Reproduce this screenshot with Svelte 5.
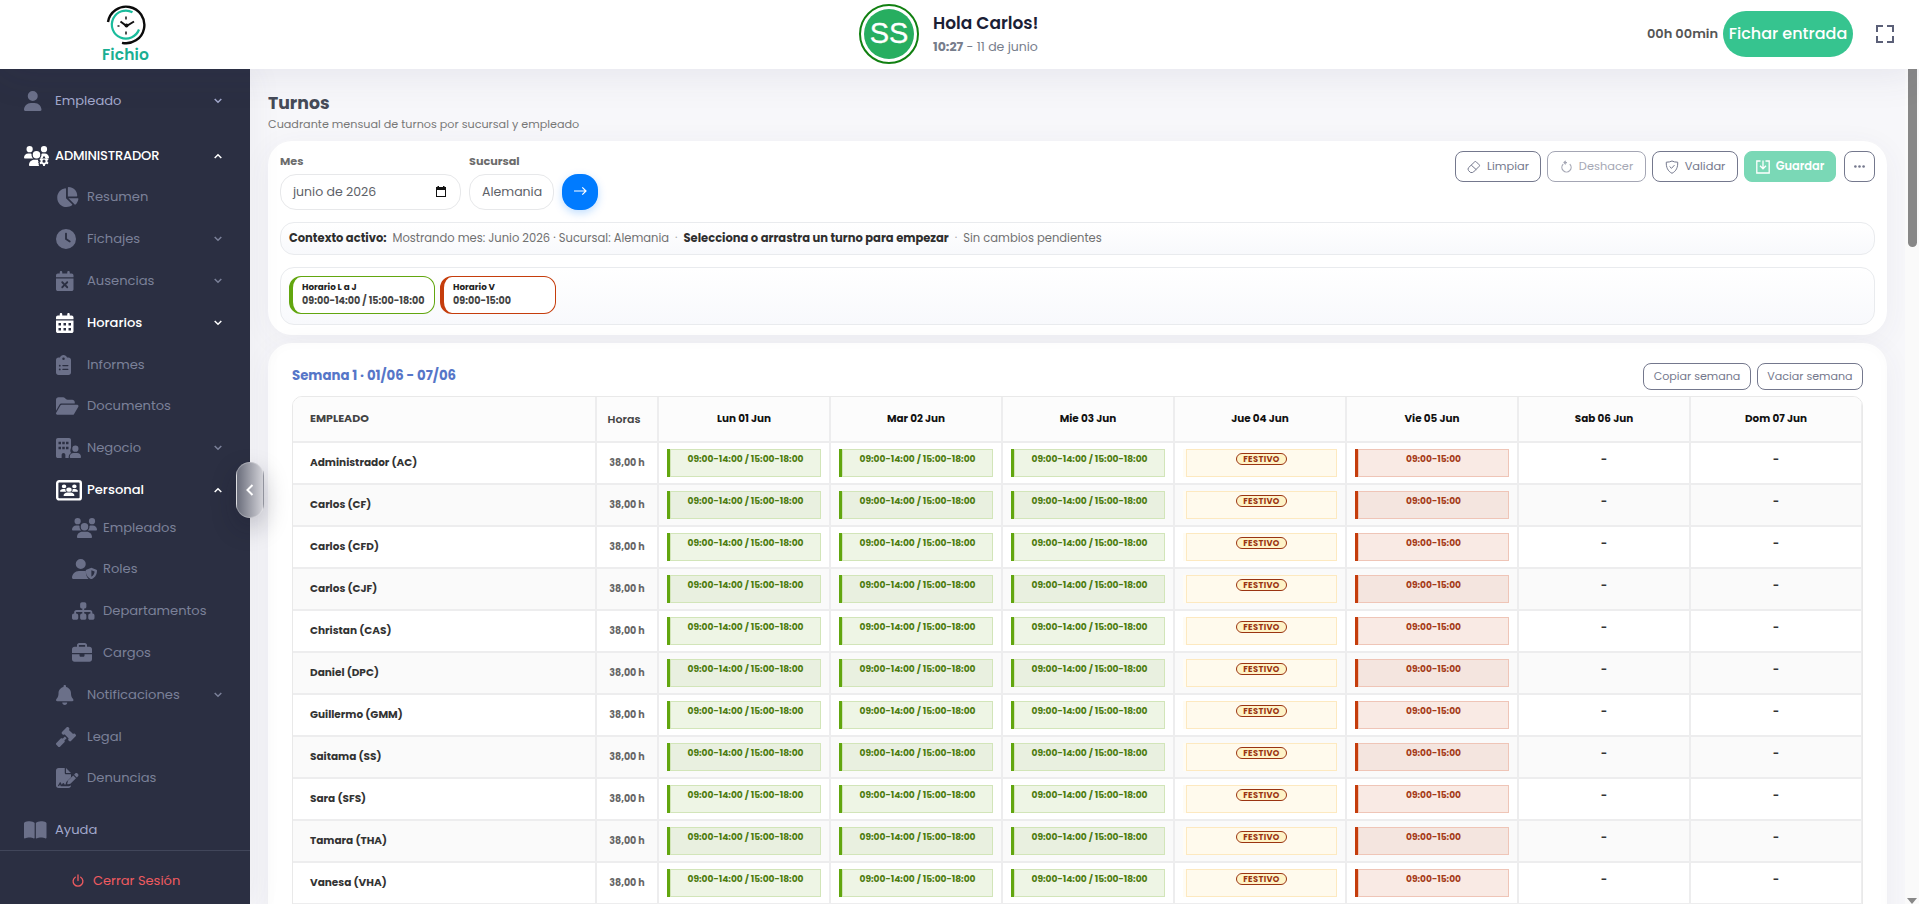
<script lang="ts">
  type Shape = { w: number; d: string };

  const usersPath =
    'M144 0a80 80 0 1 1 0 160A80 80 0 1 1 144 0zM512 0a80 80 0 1 1 0 160A80 80 0 1 1 512 0zM0 298.7C0 239.8 47.8 192 106.7 192l42.7 0c15.9 0 31 3.5 44.6 9.7c-1.3 7.2-1.9 14.7-1.9 22.3c0 38.2 16.8 72.5 43.3 96c-.2 0-.4 0-.7 0L21.3 320C9.6 320 0 310.4 0 298.7zM405.3 320c-.2 0-.4 0-.7 0c26.6-23.5 43.3-57.8 43.3-96c0-7.6-.7-15-1.9-22.3c13.6-6.3 28.7-9.7 44.6-9.7l42.7 0C592.2 192 640 239.8 640 298.7c0 11.8-9.6 21.3-21.3 21.3l-213.3 0zM224 224a96 96 0 1 1 192 0 96 96 0 1 1 -192 0z';

  const icons: Record<string, Shape> = {
    user: {
      w: 448,
      d: 'M224 256A128 128 0 1 0 224 0a128 128 0 1 0 0 256zm-45.7 48C79.8 304 0 383.8 0 482.3C0 498.7 13.3 512 29.7 512l388.6 0c16.4 0 29.7-13.3 29.7-29.7C448 383.8 368.2 304 269.7 304l-91.4 0z',
    },
    usersGear: {
      w: 640,
      d:
        usersPath +
        'M128 485.3C128 411.7 187.7 352 261.3 352l100 0c-8 18-2 30 12 42-16 22-12 36 6 52-10 22-4 44 12 66l-236.7 0c-14.7 0-26.7-11.9-26.7-26.7zM490 268h44l8 36 28 16 35-11 22 38-27 25v32l27 25-22 38-35-11-28 16-8 40h-44l-8-40-28-16-35 11-22-38 27-25v-32l-27-25 22-38 35 11 28-16zM512 348a40 40 0 1 0 0 80 40 40 0 1 0 0-80z',
    },
    pie: {
      w: 576,
      d: 'M304 240l0-223.4c0-9 7-16.6 16-16.6C443.7 0 544 100.3 544 224c0 9-7.6 16-16.6 16L304 240zM32 272C32 150.7 122.1 50.3 239 34.3c9.2-1.3 17 6.1 17 15.4L256 288 412.5 444.5c6.7 6.7 6.2 17.7-1.5 23.1C371.8 495.6 323.8 512 272 512C139.5 512 32 404.6 32 272zm526.4 16c9.3 0 16.6 7.8 15.4 17c-7.7 55.9-34.6 105.6-73.9 142.3c-6 5.6-15.4 5.2-21.2-.7L320 288l238.4 0z',
    },
    clock: {
      w: 512,
      d: 'M256 0a256 256 0 1 1 0 512A256 256 0 1 1 256 0zM232 120l0 136c0 8 4 15.5 10.7 20l96 64c11 7.4 25.9 4.4 33.3-6.7s4.4-25.9-6.7-33.3L280 243.2 280 120c0-13.3-10.7-24-24-24s-24 10.7-24 24z',
    },
    calendarX: {
      w: 448,
      d: 'M128 0c17.7 0 32 14.3 32 32l0 32 128 0 0-32c0-17.7 14.3-32 32-32s32 14.3 32 32l0 32 48 0c26.5 0 48 21.5 48 48l0 48L0 160l0-48C0 85.5 21.5 64 48 64l48 0 0-32c0-17.7 14.3-32 32-32zM0 192l448 0 0 272c0 26.5-21.5 48-48 48L48 512c-26.5 0-48-21.5-48-48L0 192zM305 305c9.4-9.4 9.4-24.6 0-33.9s-24.6-9.4-33.9 0l-47 47-47-47c-9.4-9.4-24.6-9.4-33.9 0s-9.4 24.6 0 33.9l47 47-47 47c-9.4 9.4-9.4 24.6 0 33.9s24.6 9.4 33.9 0l47-47 47 47c9.4 9.4 24.6 9.4 33.9 0s9.4-24.6 0-33.9l-47-47 47-47z',
    },
    calendar: {
      w: 448,
      d: 'M128 0c17.7 0 32 14.3 32 32l0 32 128 0 0-32c0-17.7 14.3-32 32-32s32 14.3 32 32l0 32 48 0c26.5 0 48 21.5 48 48l0 48L0 160l0-48C0 85.5 21.5 64 48 64l48 0 0-32c0-17.7 14.3-32 32-32zM0 192l448 0 0 272c0 26.5-21.5 48-48 48L48 512c-26.5 0-48-21.5-48-48L0 192zM64 256v64h64v-64zM192 256v64h64v-64zM320 256v64h64v-64zM64 384v64h64v-64zM192 384v64h64v-64zM320 384v64h64v-64z',
    },
    clipboard: {
      w: 384,
      d: 'M192 0c-41.8 0-77.4 26.7-90.5 64L64 64C28.7 64 0 92.7 0 128L0 448c0 35.3 28.7 64 64 64l256 0c35.3 0 64-28.7 64-64l0-320c0-35.3-28.7-64-64-64l-37.5 0C269.4 26.7 233.8 0 192 0zm0 64a32 32 0 1 1 0 64 32 32 0 1 1 0-64zM72 272a24 24 0 1 1 48 0 24 24 0 1 1-48 0zm104-16h128c22 0 22 32 0 32H176c-22 0-22-32 0-32zM72 368a24 24 0 1 1 48 0 24 24 0 1 1-48 0zm104-16h128c22 0 22 32 0 32H176c-22 0-22-32 0-32z',
    },
    folder: {
      w: 576,
      d: 'M88.7 223.8L0 375.8 0 96C0 60.7 28.7 32 64 32l117.5 0c17 0 33.3 6.7 45.3 18.7l26.5 26.5c12 12 28.3 18.7 45.3 18.7L416 96c35.3 0 64 28.7 64 64l0 32-336 0c-22.8 0-43.8 12.1-55.3 31.8zm27.6 16.1C122.1 230 132.6 224 144 224l400 0c11.5 0 22 6.1 27.7 16.1s5.7 22.2-.1 32.1l-112 192C453.9 474 443.4 480 432 480L32 480c-11.5 0-22-6.1-27.7-16.1s-5.7-22.2 .1-32.1l112-192z',
    },
    buildingUser: {
      w: 640,
      d: 'M48 0C21.5 0 0 21.5 0 48V464c0 26.5 21.5 48 48 48h96v-80c0-26.5 21.5-48 48-48s48 21.5 48 48v80h85c-6-60 18-104 59-130-24-42-22-88 0-128V48c0-26.5-21.5-48-48-48zM64 96h64v64H64zM160 96h64v64h-64zM256 96h64v64h-64zM64 224h64v64H64zM160 224h64v64h-64zM256 224h64v64h-64zM496 192a80 80 0 1 1 0 160 80 80 0 1 1 0-160zM352 485.3C352 426 396 384 450 384h92c54 0 98 42 98 101.3 0 15-12 26.7-27 26.7H379c-15 0-27-12-27-26.7z',
    },
    users: {
      w: 640,
      d:
        usersPath +
        'M128 485.3C128 411.7 187.7 352 261.3 352l117.3 0C452.3 352 512 411.7 512 485.3c0 14.7-11.9 26.7-26.7 26.7l-330.7 0c-14.7 0-26.7-11.9-26.7-26.7z',
    },
    userShield: {
      w: 640,
      d: 'M224 256A128 128 0 1 0 224 0a128 128 0 1 0 0 256zm-45.7 48C79.8 304 0 383.8 0 482.3C0 498.7 13.3 512 29.7 512l388.6 0c2 0 5 0 7-1-40-42-72-105-72-180 0-10 2-18 6-25-25-2-60-2-181 0zM496 224l128 48c10 4 16 12 16 22 0 90-34 170-128 215-10 4-22 4-32 0-94-45-128-125-128-215 0-10 6-18 16-22zm0 65v163c52-28 80-75 82-132z',
    },
    sitemap: {
      w: 576,
      d: 'M208 80c0-26.5 21.5-48 48-48l64 0c26.5 0 48 21.5 48 48l0 64c0 26.5-21.5 48-48 48l-8 0 0 40 152 0c30.9 0 56 25.1 56 56l0 32 8 0c26.5 0 48 21.5 48 48l0 64c0 26.5-21.5 48-48 48l-64 0c-26.5 0-48-21.5-48-48l0-64c0-26.5 21.5-48 48-48l8 0 0-32c0-4.4-3.6-8-8-8l-152 0 0 40 8 0c26.5 0 48 21.5 48 48l0 64c0 26.5-21.5 48-48 48l-64 0c-26.5 0-48-21.5-48-48l0-64c0-26.5 21.5-48 48-48l8 0 0-40-152 0c-4.4 0-8 3.6-8 8l0 32 8 0c26.5 0 48 21.5 48 48l0 64c0 26.5-21.5 48-48 48l-64 0c-26.5 0-48-21.5-48-48l0-64c0-26.5 21.5-48 48-48l8 0 0-32c0-30.9 25.1-56 56-56l152 0 0-40-8 0c-26.5 0-48-21.5-48-48l0-64z',
    },
    briefcase: {
      w: 512,
      d: 'M184 48l144 0c4.4 0 8 3.6 8 8l0 40L176 96l0-40c0-4.4 3.6-8 8-8zm-56 8l0 40L64 96C28.7 96 0 124.7 0 160l0 96 192 0 128 0 192 0 0-96c0-35.3-28.7-64-64-64l-64 0 0-40c0-30.9-25.1-56-56-56L184 0c-30.9 0-56 25.1-56 56zM512 288l-192 0 0 32c0 17.7-14.3 32-32 32l-64 0c-17.7 0-32-14.3-32-32l0-32L0 288 0 416c0 35.3 28.7 64 64 64l384 0c35.3 0 64-28.7 64-64l0-128z',
    },
    bell: {
      w: 448,
      d: 'M224 0c-17.7 0-32 14.3-32 32l0 19.2C119 66 64 130.6 64 208l0 18.8c0 47-17.3 92.4-48.5 127.6l-7.4 8.3c-8.4 9.4-10.4 22.9-5.3 34.4S19.4 416 32 416l384 0c12.6 0 24-7.4 29.2-18.9s3.1-25-5.3-34.4l-7.4-8.3C401.3 319.2 384 273.9 384 226.8l0-18.8c0-77.4-55-142-128-156.8L256 32c0-17.7-14.3-32-32-32zm45.3 493.3c12-12 18.7-28.3 18.7-45.3l-64 0-64 0c0 17 6.7 33.3 18.7 45.3s28.3 18.7 45.3 18.7s33.3-6.7 45.3-18.7z',
    },
    gavel: {
      w: 512,
      d: 'M318.6 9.4c-12.5-12.5-32.8-12.5-45.3 0l-120 120c-12.5 12.5-12.5 32.8 0 45.3l16 16c12.5 12.5 32.8 12.5 45.3 0l4-4L325.4 293.4l-4 4c-12.5 12.5-12.5 32.8 0 45.3l16 16c12.5 12.5 32.8 12.5 45.3 0l120-120c12.5-12.5 12.5-32.8 0-45.3l-16-16c-12.5-12.5-32.8-12.5-45.3 0l-4 4L330.6 74.6l4-4c12.5-12.5 12.5-32.8 0-45.3l-16-16zm-152 288c-12.5-12.5-32.8-12.5-45.3 0l-112 112c-12.5 12.5-12.5 32.8 0 45.3l48 48c12.5 12.5 32.8 12.5 45.3 0l112-112c12.5-12.5 12.5-32.8 0-45.3l-1.4-1.4L272 285.3 226.7 240 168 298.7l-1.4-1.4z',
    },
    signature: {
      w: 576,
      d: 'M64 0C28.7 0 0 28.7 0 64V448c0 35.3 28.7 64 64 64h256c35.3 0 64-28.7 64-64v-8c-20 18-50 25-85 25H120l-16-40-30 42-26-14 45-78c8-14 26-12 32 2l22 50 26-36c10-14 28-10 34 4l12 28h26l18-66L384 236v-76H256c-17.7 0-32-14.3-32-32V0zM256 0v128h128zM550 140c-16-16-42-16-58 0l-30 30 71 71 30-30c16-16 16-42 0-58zM440 192L311 321c-4 4-7 9-8 15l-15 60c-3 12 8 23 20 20l60-15c6-1 11-4 15-8l129-129z',
    },
    book: {
      w: 576,
      d: 'M249.6 471.5c10.8 3.8 22.4-4.1 22.4-15.5l0-377.4c0-4.2-1.6-8.4-5-11C247.4 52 202.4 32 144 32C93.5 32 46.3 45.3 18.1 56.1C6.8 60.5 0 71.7 0 83.8L0 454.1c0 11.9 12.8 20.2 24.1 16.5C55.6 460.1 105.5 448 144 448c33.9 0 79 14 105.6 23.5zm76.8 0C353 462 398.1 448 432 448c38.5 0 88.4 12.1 119.9 22.6c11.3 3.8 24.1-4.6 24.1-16.5l0-370.3c0-12.1-6.8-23.3-18.1-27.6C529.7 45.3 482.5 32 432 32c-58.4 0-103.4 20-123 35.6c-3.3 2.6-5 6.8-5 11L304 456c0 11.4 11.7 19.3 22.4 15.5z',
    },
  };

  type Item = {
    label: string;
    icon: string;
    level: number;
    chevron?: 'up' | 'down';
    active?: boolean;
    tight?: boolean;
  };

  const menu: Item[] = [
    { label: 'Empleado', icon: 'user', level: 1, chevron: 'down' },
    { label: 'ADMINISTRADOR', icon: 'usersGear', level: 1, chevron: 'up', active: true },
    { label: 'Resumen', icon: 'pie', level: 2 },
    { label: 'Fichajes', icon: 'clock', level: 2, chevron: 'down' },
    { label: 'Ausencias', icon: 'calendarX', level: 2, chevron: 'down' },
    { label: 'Horarios', icon: 'calendar', level: 2, chevron: 'down', active: true },
    { label: 'Informes', icon: 'clipboard', level: 2, tight: true },
    { label: 'Documentos', icon: 'folder', level: 2 },
    { label: 'Negocio', icon: 'buildingUser', level: 2, chevron: 'down' },
    { label: 'Personal', icon: 'frame', level: 2, chevron: 'up', active: true },
    { label: 'Empleados', icon: 'users', level: 3, tight: true },
    { label: 'Roles', icon: 'userShield', level: 3 },
    { label: 'Departamentos', icon: 'sitemap', level: 3 },
    { label: 'Cargos', icon: 'briefcase', level: 3 },
    { label: 'Notificaciones', icon: 'bell', level: 2, chevron: 'down' },
    { label: 'Legal', icon: 'gavel', level: 2, tight: true },
    { label: 'Denuncias', icon: 'signature', level: 2 },
    { label: 'Ayuda', icon: 'book', level: 1 },
  ];

  const days = ['Lun 01 Jun', 'Mar 02 Jun', 'Mie 03 Jun', 'Jue 04 Jun', 'Vie 05 Jun', 'Sab 06 Jun', 'Dom 07 Jun'];
  const week = ['long', 'long', 'long', 'holiday', 'short', 'free', 'free'];

  const employees = [
    'Administrador (AC)',
    'Carlos (CF)',
    'Carlos (CFD)',
    'Carlos (CJF)',
    'Christan (CAS)',
    'Daniel (DPC)',
    'Guillermo (GMM)',
    'Saitama (SS)',
    'Sara (SFS)',
    'Tamara (THA)',
    'Vanesa (VHA)',
  ];

  let month = 'junio de 2026';
  let branch = 'Alemania';
</script>

<div class="app">
  <header class="topbar">
    <div class="logo">
      <svg width="40" height="40" viewBox="0 0 40 40" fill="none">
        <path d="M2 17A18.3 18.3 0 1 1 16 37.8" stroke="#0b0b0b" stroke-width="2.4" />
        <path d="M26.5 7.3A14 14 0 1 0 33 24.5" stroke="#1abc9c" stroke-width="2.2" />
        <path d="M14.5 16.5l6 4.5 7.5-4.5" stroke="#111" stroke-width="2" />
        <path d="M20 11.5v3M20 26.5v3M11.5 21h2" stroke="#222" stroke-width="1.6" />
        <circle cx="20.5" cy="20.5" r="2" fill="#111" />
      </svg>
      <span>Fichio</span>
    </div>
    <div class="greeting">
      <div class="avatar"><span>SS</span></div>
      <div>
        <div class="hello">Hola Carlos!</div>
        <div class="now"><b>10:27</b> - 11 de junio</div>
      </div>
    </div>
    <div class="clock-in">
      <span class="worked">00h 00min</span>
      <button class="clock-btn">Fichar entrada</button>
      <svg class="expand" width="18" height="18" viewBox="0 0 18 18" fill="none" stroke="#5b6078" stroke-width="2">
        <path d="M1 7V1h6M11 1h6v6M17 11v6h-6M7 17H1v-6" />
      </svg>
    </div>
  </header>

  <aside class="sidebar">
    <nav>
      {#each menu as item}
        <a class="item level{item.level}" class:active={item.active} class:tight={item.tight} href="#{item.label}">
          <span class="icon">
            {#if item.icon === 'frame'}
              <svg width="26" height="21" viewBox="0 0 26 21">
                <rect x="1.2" y="1.2" width="23.6" height="18.2" rx="2" fill="none" stroke="currentColor" stroke-width="2.4" />
                <g transform="translate(4 4.6) scale(.0281 .0225)">
                  <path d={icons.users.d} fill="currentColor" />
                </g>
              </svg>
            {:else}
              <svg width={(icons[item.icon].w * 20) / 512} height="20" viewBox="0 0 {icons[item.icon].w} 512">
                <path d={icons[item.icon].d} fill="currentColor" fill-rule="evenodd" />
              </svg>
            {/if}
          </span>
          <span class="label">{item.label}</span>
          {#if item.chevron}
            <svg class="chevron" class:up={item.chevron === 'up'} width="8" height="6" viewBox="0 0 8 6" fill="none">
              <path d="M.7 1L4 4.3 7.3 1" stroke="currentColor" stroke-width="1.5" />
            </svg>
          {/if}
        </a>
      {/each}
    </nav>
    <a class="logout" href="#salir">
      <svg width="12" height="13" viewBox="0 0 12 13" fill="none" stroke="currentColor" stroke-width="1.3" stroke-linecap="round">
        <path d="M6 1v5.5M3.3 3.2a4.9 4.9 0 1 0 5.4 0" />
      </svg>
      Cerrar Sesión
    </a>
    <button class="collapse" aria-label="Contraer menú">
      <svg width="8" height="12" viewBox="0 0 8 12" fill="none" stroke="#fff" stroke-width="2">
        <path d="M6.5 1L1.5 6l5 5" />
      </svg>
    </button>
  </aside>

  <main>
    <h1>Turnos</h1>
    <p class="subtitle">Cuadrante mensual de turnos por sucursal y empleado</p>

    <section class="card filters">
      <div class="filter-row">
        <div class="field">
          <span class="field-label">Mes</span>
          <div class="input month">
            {month}
            <svg width="10" height="11" viewBox="0 0 10 11">
              <path d="M0 1h1.5V0h1.5v1h4V0h1.5v1H10v10H0zM1 4v6h8V4z" fill="#111" fill-rule="evenodd" />
            </svg>
          </div>
        </div>
        <div class="field">
          <span class="field-label">Sucursal</span>
          <div class="input branch">{branch}</div>
        </div>
        <button class="go" aria-label="Aplicar">
          <svg width="13" height="10" viewBox="0 0 13 10" fill="none" stroke="#fff" stroke-width="1.2">
            <path d="M0 5h12M8.3 1.3L12 5 8.3 8.7" />
          </svg>
        </button>
        <div class="actions">
          <button class="btn clean">
            <svg width="14" height="14" viewBox="0 0 14 14" fill="none" stroke="currentColor">
              <path d="M1.5 7.7L7.7 1.8q.8-.6 1.5 0l3 3q.7.8 0 1.5L6.5 12q-.6.5-1.3.5H4q-.6 0-1-.4L1.5 10.5q-1-1.3 0-2.8zM4.3 5.2l5 4.5" />
            </svg>
            Limpiar
          </button>
          <button class="btn undo" disabled>
            <svg width="13" height="14" viewBox="0 0 13 14" fill="none" stroke="currentColor" stroke-width="1.2">
              <path d="M3.2 4.2a4.6 4.6 0 1 0 6.6 0M7 2.6H4M5.7 .8L4 2.6l1.7 1.7" />
            </svg>
            Deshacer
          </button>
          <button class="btn check">
            <svg width="14" height="14" viewBox="0 0 14 14" fill="none" stroke="currentColor">
              <path d="M7 1C5.5 1.8 3.5 2.2 1.3 2.2c-.3 5 1.5 9 5.7 11.1 4.2-2.1 6-6.1 5.7-11.1C10.5 2.2 8.5 1.8 7 1zM4.6 6.5l1.9 1.8 3-3.2" />
            </svg>
            Validar
          </button>
          <button class="btn save" disabled>
            <svg width="14" height="14" viewBox="0 0 14 14" fill="none" stroke="currentColor" stroke-width="1.3">
              <path d="M4.5 1H.8v12h12.4V1H9.5M7 .5v8M4 5.8l3 3 3-3" />
            </svg>
            Guardar
          </button>
          <button class="btn more" aria-label="Más">
            <svg width="11" height="3" viewBox="0 0 11 3" fill="currentColor">
              <circle cx="1.4" cy="1.5" r="1.3" />
              <circle cx="5.5" cy="1.5" r="1.3" />
              <circle cx="9.6" cy="1.5" r="1.3" />
            </svg>
          </button>
        </div>
      </div>

      <div class="context">
        <b>Contexto activo:</b>
        <span>Mostrando mes: Junio 2026 · Sucursal: Alemania</span>
        <i>·</i>
        <b>Selecciona o arrastra un turno para empezar</b>
        <i>·</i>
        <span>Sin cambios pendientes</span>
      </div>

      <div class="palette">
        <div class="chip">
          <b>Horario L a J</b>
          <span>09:00-14:00 / 15:00-18:00</span>
        </div>
        <div class="chip red">
          <b>Horario V</b>
          <span>09:00-15:00</span>
        </div>
      </div>
    </section>

    <section class="card week">
      <div class="week-head">
        <h2>Semana 1 · 01/06 - 07/06</h2>
        <button class="btn small copy">Copiar semana</button>
        <button class="btn small empty">Vaciar semana</button>
      </div>
      <div class="grid">
        <div class="row head">
          <div class="cell name">EMPLEADO</div>
          <div class="cell hours">Horas</div>
          {#each days as day}
            <div class="cell day">{day}</div>
          {/each}
        </div>
        {#each employees as employee}
          <div class="row">
            <div class="cell name">{employee}</div>
            <div class="cell hours">38,00 h</div>
            {#each week as kind}
              <div class="cell">
                {#if kind === 'long'}
                  <div class="shift">09:00-14:00 / 15:00-18:00</div>
                {:else if kind === 'short'}
                  <div class="shift red">09:00-15:00</div>
                {:else if kind === 'holiday'}
                  <div class="shift holiday"><span>FESTIVO</span></div>
                {:else}
                  <div class="none">-</div>
                {/if}
              </div>
            {/each}
          </div>
        {/each}
      </div>
    </section>
  </main>

  <div class="scrollbar"><div class="thumb"></div><div class="arrow"></div></div>
</div>

<style>
  :global(body) {
    overflow: hidden;
  }

  .app {
    display: grid;
    grid-template: 69px 835px / 250px 1fr 14px;
    width: 1919px;
    height: 904px;
    overflow: hidden;
    background: #f7f7fa;
    font-family: Poppins, Inter, sans-serif;
    color: #333;
  }

  * {
    box-sizing: border-box;
  }

  button {
    font-family: inherit;
    padding: 0;
    border: 0;
    background: none;
  }

  svg {
    display: block;
    flex: none;
  }

  a {
    color: inherit;
    text-decoration: none;
  }

  .topbar {
    grid-column: 1 / -1;
    display: grid;
    grid-template-columns: 250px 1fr 400px;
    background: #fff;
    z-index: 2;
    box-shadow: 0 4px 40px rgba(60, 60, 110, 0.1);
  }

  .logo {
    display: flex;
    flex-direction: column;
    align-items: center;
    padding: 5px 0 0 1px;
  }

  .logo span {
    color: #1aae92;
    font-size: 15.5px;
    font-weight: 600;
    line-height: 19px;
    letter-spacing: 0.1px;
  }

  .greeting {
    display: flex;
    align-items: flex-start;
    gap: 14px;
    padding: 4px 0 0 609px;
    line-height: 1;
  }

  .avatar {
    width: 60px;
    height: 60px;
    border: 2px solid #118011;
    border-radius: 50%;
    padding: 3px;
  }

  .avatar span {
    display: block;
    height: 50px;
    border-radius: 50%;
    background: #27ae60;
    color: #fff;
    font: 29px/49px 'Liberation Sans', sans-serif;
    -webkit-text-stroke: 0.3px #fff;
    text-align: center;
  }

  .hello {
    margin-top: 11px;
    color: #1a2035;
    font-size: 17px;
    font-weight: 600;
    white-space: nowrap;
  }

  .now {
    margin-top: 9px;
    color: #777d8c;
    font-size: 12.5px;
    white-space: nowrap;
  }

  .clock-in {
    display: flex;
    align-items: center;
    justify-content: flex-end;
    padding: 0 25px 2px 0;
  }

  .worked {
    color: #555;
    font-size: 13px;
    font-weight: 600;
  }

  .clock-btn {
    width: 130px;
    height: 46px;
    margin: 0 23px 0 5px;
    border-radius: 23px;
    background: #36c48f;
    color: #fff;
    font-size: 16px;
    font-weight: 500;
    white-space: nowrap;
  }

  .sidebar {
    position: relative;
    z-index: 1;
    display: flex;
    flex-direction: column;
    background: #2b2f42;
    box-shadow: 4px 0 30px rgba(60, 60, 110, 0.06);
  }

  nav {
    height: 782px;
    padding-top: 11px;
    border-bottom: 1px solid #41465a;
  }

  .item {
    display: flex;
    align-items: center;
    height: 42px;
    padding: 0 28px 0 56px;
    color: #7b8199;
    font-size: 13.1px;
  }

  .level1 {
    height: 55px;
    margin-bottom: -7px;
    padding-left: 24px;
    color: #a2a8cc;
  }

  .level1:first-child {
    height: 42px;
    margin-bottom: 6px;
  }

  .level1:last-child {
    height: 62px;
  }

  .level3 {
    padding-left: 72px;
  }

  .item.active + .level3 {
    margin-top: -4px;
  }

  .tight {
    margin-bottom: -1px;
  }

  .item.active {
    color: #fff;
    font-weight: 500;
  }

  .level1.active {
    letter-spacing: -0.2px;
  }

  .item .icon {
    width: 31px;
    color: #6b7089;
  }

  .item.active .icon {
    color: #fff;
  }

  .chevron {
    margin-left: auto;
  }

  .chevron.up {
    transform: scaleY(-1);
  }

  .logout {
    display: flex;
    align-items: center;
    gap: 9px;
    height: 53px;
    padding: 6px 0 0 72px;
    color: #f05b60;
    font-size: 13px;
  }

  .collapse {
    position: absolute;
    left: 236px;
    top: 393px;
    width: 28px;
    height: 56px;
    display: flex;
    align-items: center;
    justify-content: center;
    border: 1px solid rgba(255, 255, 255, 0.25);
    border-radius: 14px;
    background: linear-gradient(90deg, #6a6d7b, #d2d2d8);
    box-shadow: 0 10px 24px rgba(20, 20, 40, 0.25);
  }

  main {
    padding: 23px 18px 0 18px;
    overflow: hidden;
  }

  h1 {
    margin: 0;
    color: #464b58;
    font-size: 17.3px;
    font-weight: 700;
    line-height: 22px;
  }

  .subtitle {
    margin: 2px 0 9px;
    color: #777;
    font-size: 11.2px;
    line-height: 16px;
  }

  .card {
    border-radius: 24px;
    background: #fff;
    box-shadow: 0 6px 30px rgba(60, 60, 110, 0.06);
  }

  .filters {
    height: 194px;
    padding: 10px 12px;
  }

  .filter-row {
    display: flex;
    align-items: flex-end;
    height: 59px;
    gap: 8px;
  }

  .field-label {
    display: block;
    margin-bottom: 6px;
    color: #6c6c6c;
    font-size: 11.2px;
    font-weight: 700;
    line-height: 14px;
  }

  .input {
    display: flex;
    align-items: center;
    justify-content: space-between;
    height: 36px;
    padding: 0 14px 1px 12px;
    border: 1px solid #e7e8ea;
    border-radius: 16px;
    color: #5d6168;
    font-size: 12.5px;
    white-space: nowrap;
  }

  .month {
    width: 181px;
  }

  .branch {
    width: 85px;
  }

  .go {
    display: flex;
    align-items: center;
    justify-content: center;
    width: 36px;
    height: 36px;
    padding-bottom: 2px;
    border-radius: 16px;
    background: #007bff;
    box-shadow: 0 3px 8px rgba(0, 123, 255, 0.25);
  }

  .actions {
    display: flex;
    align-self: flex-start;
    gap: 6px;
    margin-left: auto;
  }

  .btn {
    display: flex;
    align-items: center;
    justify-content: center;
    gap: 6px;
    height: 31px;
    border: 1px solid #74788d;
    border-radius: 8px;
    color: #74788d;
    font-size: 11.4px;
    white-space: nowrap;
  }

  .clean,
  .check {
    width: 86px;
  }

  .undo {
    width: 99px;
    opacity: 0.65;
  }

  .save {
    width: 92px;
    border-color: #7ad8b6;
    background: #7ad8b6;
    color: #fff;
    font-weight: 600;
  }

  .more {
    width: 31px;
    margin-left: 2px;
  }

  .context {
    display: flex;
    align-items: center;
    gap: 6px;
    height: 33px;
    margin-top: 12px;
    padding: 0 8px 1px;
    border: 1px solid #e9ebee;
    border-radius: 14px;
    background: linear-gradient(#fff, #f8f9fc);
    color: #707070;
    font-size: 11.52px;
    white-space: nowrap;
  }

  .context b {
    color: #2f2f2f;
    font-weight: 700;
  }

  .context i {
    color: #aaa;
    font-style: normal;
  }

  .palette {
    display: flex;
    gap: 5px;
    height: 58px;
    margin-top: 12px;
    padding: 8px;
    border: 1px solid #e9ebee;
    border-radius: 14px;
    background: linear-gradient(#fff, #f8f9fc);
  }

  .chip {
    width: 146px;
    height: 38px;
    padding: 3px 0 0 9px;
    border: 1px solid #62a60f;
    border-left-width: 4px;
    border-radius: 12px;
    background: #fff;
    color: #444;
    font-size: 9.6px;
    font-weight: 700;
    line-height: 13px;
    white-space: nowrap;
  }

  .chip.red {
    width: 116px;
    border-color: #c53d0c;
  }

  .chip b {
    display: block;
    font-size: 8.8px;
    font-weight: 700;
    line-height: 14px;
    color: #222;
  }

  .week {
    height: 620px;
    margin-top: 8px;
    padding: 20px 24px 0;
    box-shadow:
      0 6px 30px rgba(60, 60, 110, 0.06),
      inset 0 0 14px rgba(60, 60, 110, 0.02);
  }

  .week-head {
    display: flex;
    gap: 6px;
    height: 33px;
  }

  h2 {
    margin: 0 auto 0 0;
    color: #5676c8;
    font-size: 13.3px;
    font-weight: 700;
    line-height: 25px;
  }

  .small {
    height: 27px;
    font-size: 11.1px;
  }

  .copy {
    width: 108px;
  }

  .empty {
    width: 106px;
  }

  .grid {
    border: 1px solid #e9e9e9;
    border-radius: 10px 10px 0 0;
    overflow: hidden;
  }

  .row {
    display: grid;
    grid-template: 42px / 304px 62px repeat(7, 172px);
    background: #fff;
  }

  .row:nth-child(odd) {
    background: #fafafa;
  }

  .row.head {
    grid-template-rows: 46px;
    background: #fcfcfc;
  }

  .cell {
    padding: 6px 8px 0 11px;
    border-right: 2px solid #ededee;
    border-bottom: 2px solid #ededee;
    text-align: center;
  }

  .cell.name {
    padding: 0 0 0 17px;
    text-align: left;
    font-size: 10.5px;
    font-weight: 700;
    line-height: 40px;
  }

  .cell.hours {
    padding: 0;
    color: #666;
    font-size: 9.5px;
    font-weight: 700;
    line-height: 40px;
  }

  .head .cell {
    padding-top: 0;
    color: #444;
    font-size: 11px;
    font-weight: 700;
    line-height: 43px;
  }

  .head .cell.hours {
    padding: 1px 6px 0 0;
    font-weight: 600;
    line-height: 43px;
  }

  .head .cell.day {
    padding: 0;
    color: #111;
    font-size: 10.4px;
    line-height: 44px;
  }

  .shift {
    height: 28px;
    border: 1px solid #d2e5b9;
    background: rgba(98, 166, 15, 0.11);
    box-shadow: -3px 0 #62a60f;
    color: #4d7c0f;
    font-size: 9.1px;
    font-weight: 700;
    line-height: 18px;
    white-space: nowrap;
  }

  .shift.red {
    border-color: #efc5b7;
    background: rgba(197, 61, 12, 0.11);
    box-shadow: -3px 0 #c53d0c;
    color: #a53b18;
  }

  .shift.holiday {
    display: flex;
    justify-content: center;
    align-items: flex-start;
    padding-top: 3px;
    border-color: #fde9c0;
    background: #fffaed;
    box-shadow: -3px 0 #fffcf4;
  }

  .holiday span {
    width: 51px;
    height: 12px;
    border: 1px solid #9a3412;
    border-radius: 6px;
    background: #fef3c7;
    color: #9a3412;
    font-size: 8.3px;
    font-weight: 700;
    line-height: 11px;
    letter-spacing: 0.35px;
  }

  .none {
    padding-right: 3px;
    color: #333;
    font-size: 10.5px;
    font-weight: 700;
    line-height: 22px;
  }

  .scrollbar {
    display: flex;
    flex-direction: column;
    justify-content: space-between;
    align-items: center;
    background: #fafafa;
  }

  .thumb {
    width: 9px;
    height: 178px;
    border-radius: 0 0 5px 5px;
    background: #888;
  }

  .arrow {
    border: 5px solid transparent;
    border-top: 6px solid #888;
    border-bottom: 0;
  }
</style>
